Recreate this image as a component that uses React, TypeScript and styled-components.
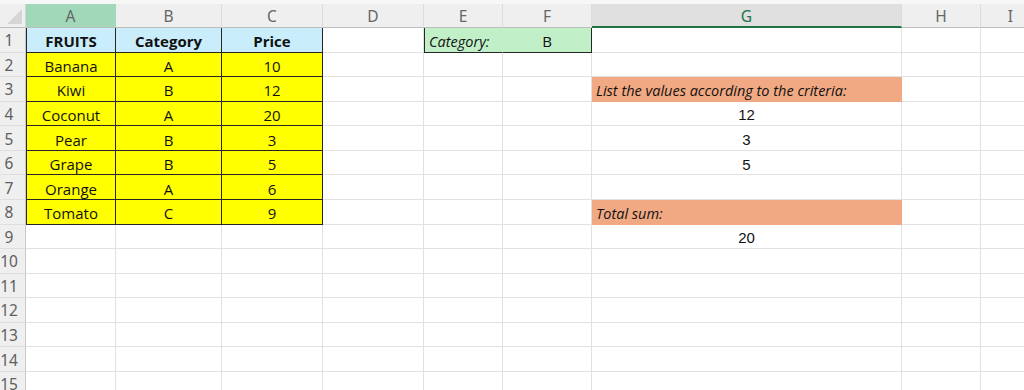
import { createGlobalStyle } from "styled-components";
import styled from "styled-components";

const GlobalStyle = createGlobalStyle`
  html, body {
    margin: 0;
    padding: 0;
    background: #ffffff;
  }
  * {
    box-sizing: border-box;
  }
`;

const COL_WIDTHS = [90, 106, 101, 101, 79, 89, 310, 79, 60];
const LETTERS = ["A", "B", "C", "D", "E", "F", "G", "H", "I"];
const ROW_COUNT = 15;

const GRID = "#e1e1e1";
const DARK = "#262626";
const YELLOW = "#ffff00";
const BLUE = "#caedfb";
const GREEN = "#c1f0c8";
const SALMON = "#f1a983";

type CellSpec = {
  text?: string;
  fill?: string;
  bold?: boolean;
  italic?: boolean;
  align?: "left" | "center";
  arial?: boolean;
  darkLeft?: boolean;
  darkRight?: boolean;
  darkBottom?: boolean;
};

const Sheet = styled.div`
  width: 1024px;
  height: 390px;
  overflow: hidden;
  padding-top: 4px;
  background: linear-gradient(#f7f7f7 0, #f7f7f7 4px, #ffffff 4px);
`;

const Grid = styled.div`
  display: grid;
  grid-template-columns: 26px ${COL_WIDTHS.map((w) => `${w}px`).join(" ")};
  grid-template-rows: 24px;
  grid-auto-rows: 24.57px;
`;

const Corner = styled.div`
  background: #efefef;
  border-right: 1px solid #d4d4d4;
  border-bottom: 1px solid #bdbdbd;
  display: flex;
  align-items: flex-end;
  justify-content: flex-end;
  padding: 0 3px 3px 0;
`;

const ColHead = styled.div<{ $state?: "picked" | "active" }>`
  display: flex;
  align-items: center;
  justify-content: center;
  font-family: "Noto Sans", "Open Sans", sans-serif;
  font-size: 15.5px;
  color: ${(p) => (p.$state === "active" ? "#217346" : "#666666")};
  background: ${(p) =>
    p.$state === "picked"
      ? "#a0d8b9"
      : p.$state === "active"
        ? "#e0e0e0"
        : "#efefef"};
  border-right: 1px solid ${(p) => (p.$state === "picked" ? "#a0d8b9" : "#dcdcdc")};
  border-bottom: ${(p) =>
    p.$state === "active" ? "2px solid #217346" : "1px solid #bdbdbd"};
  padding-top: 1px;
`;

const RowHead = styled.div`
  display: flex;
  align-items: center;
  justify-content: center;
  padding-right: 7px;
  padding-top: 1px;
  font-family: "Noto Sans", "Open Sans", sans-serif;
  font-size: 15.5px;
  color: #5e5e5e;
  background: #efefef;
  border-right: 1px solid #c8c8c8;
  border-bottom: 1px solid #dedede;
`;

const Cell = styled.div<{
  $fill?: string;
  $bold?: boolean;
  $italic?: boolean;
  $align?: "left" | "center";
  $arial?: boolean;
  $darkLeft?: boolean;
  $darkRight?: boolean;
  $darkBottom?: boolean;
}>`
  display: flex;
  align-items: center;
  justify-content: ${(p) => (p.$align === "left" ? "flex-start" : "center")};
  padding: 3px 4px 0 4px;
  white-space: nowrap;
  font-family: ${(p) =>
    p.$arial ? `"Liberation Sans", Arial, sans-serif` : `"Open Sans", "Noto Sans", sans-serif`};
  font-size: ${(p) => (p.$italic ? "14.5px" : "15px")};
  font-weight: ${(p) => (p.$bold ? 700 : 400)};
  font-style: ${(p) => (p.$italic ? "italic" : "normal")};
  color: #111111;
  background: ${(p) => p.$fill ?? "#ffffff"};
  border-left: ${(p) => (p.$darkLeft ? `1px solid ${DARK}` : "none")};
  border-right: 1px solid
    ${(p) => (p.$darkRight ? DARK : p.$fill ?? GRID)};
  border-bottom: 1px solid
    ${(p) => (p.$darkBottom ? DARK : p.$fill ?? GRID)};
`;

const fruits: [string, string, string][] = [
  ["Banana", "A", "10"],
  ["Kiwi", "B", "12"],
  ["Coconut", "A", "20"],
  ["Pear", "B", "3"],
  ["Grape", "B", "5"],
  ["Orange", "A", "6"],
  ["Tomato", "C", "9"],
];

const buildCells = (): Record<string, CellSpec> => {
  const cells: Record<string, CellSpec> = {};
  const box = { darkRight: true, darkBottom: true };

  cells["A1"] = { text: "FRUITS", fill: BLUE, bold: true, darkLeft: true, ...box };
  cells["B1"] = { text: "Category", fill: BLUE, bold: true, ...box };
  cells["C1"] = { text: "Price", fill: BLUE, bold: true, ...box };

  fruits.forEach(([name, cat, price], i) => {
    const r = i + 2;
    cells[`A${r}`] = { text: name, fill: YELLOW, darkLeft: true, ...box };
    cells[`B${r}`] = { text: cat, fill: YELLOW, ...box };
    cells[`C${r}`] = { text: price, fill: YELLOW, ...box };
  });

  cells["E1"] = {
    text: "Category:",
    fill: GREEN,
    italic: true,
    align: "left",
    darkLeft: true,
    darkBottom: true,
  };
  cells["F1"] = { text: "B", fill: GREEN, darkRight: true, darkBottom: true };

  cells["G3"] = {
    text: "List the values according to the criteria:",
    fill: SALMON,
    italic: true,
    align: "left",
  };
  cells["G4"] = { text: "12", arial: true };
  cells["G5"] = { text: "3", arial: true };
  cells["G6"] = { text: "5", arial: true };
  cells["G8"] = { text: "Total sum:", fill: SALMON, italic: true, align: "left" };
  cells["G9"] = { text: "20", arial: true };

  return cells;
};

const CornerMark = () => (
  <svg width="15" height="15" viewBox="0 0 15 15">
    <polygon points="15,0 15,15 0,15" fill="#d6d6d6" />
  </svg>
);

const Row = ({ row, cells }: { row: number; cells: Record<string, CellSpec> }) => (
  <>
    <RowHead>{row}</RowHead>
    {LETTERS.map((l) => {
      const c = cells[`${l}${row}`] ?? {};
      return (
        <Cell
          key={l}
          $fill={c.fill}
          $bold={c.bold}
          $italic={c.italic}
          $align={c.align}
          $arial={c.arial}
          $darkLeft={c.darkLeft}
          $darkRight={c.darkRight}
          $darkBottom={c.darkBottom}
        >
          {c.text}
        </Cell>
      );
    })}
  </>
);

export default function App() {
  const cells = buildCells();
  const rows = Array.from({ length: ROW_COUNT }, (_, i) => i + 1);

  return (
    <>
      <GlobalStyle />
      <Sheet>
        <Grid>
          <Corner>
            <CornerMark />
          </Corner>
          {LETTERS.map((l) => (
            <ColHead
              key={l}
              $state={l === "A" ? "picked" : l === "G" ? "active" : undefined}
            >
              {l}
            </ColHead>
          ))}
          {rows.map((r) => (
            <Row key={r} row={r} cells={cells} />
          ))}
        </Grid>
      </Sheet>
    </>
  );
}
